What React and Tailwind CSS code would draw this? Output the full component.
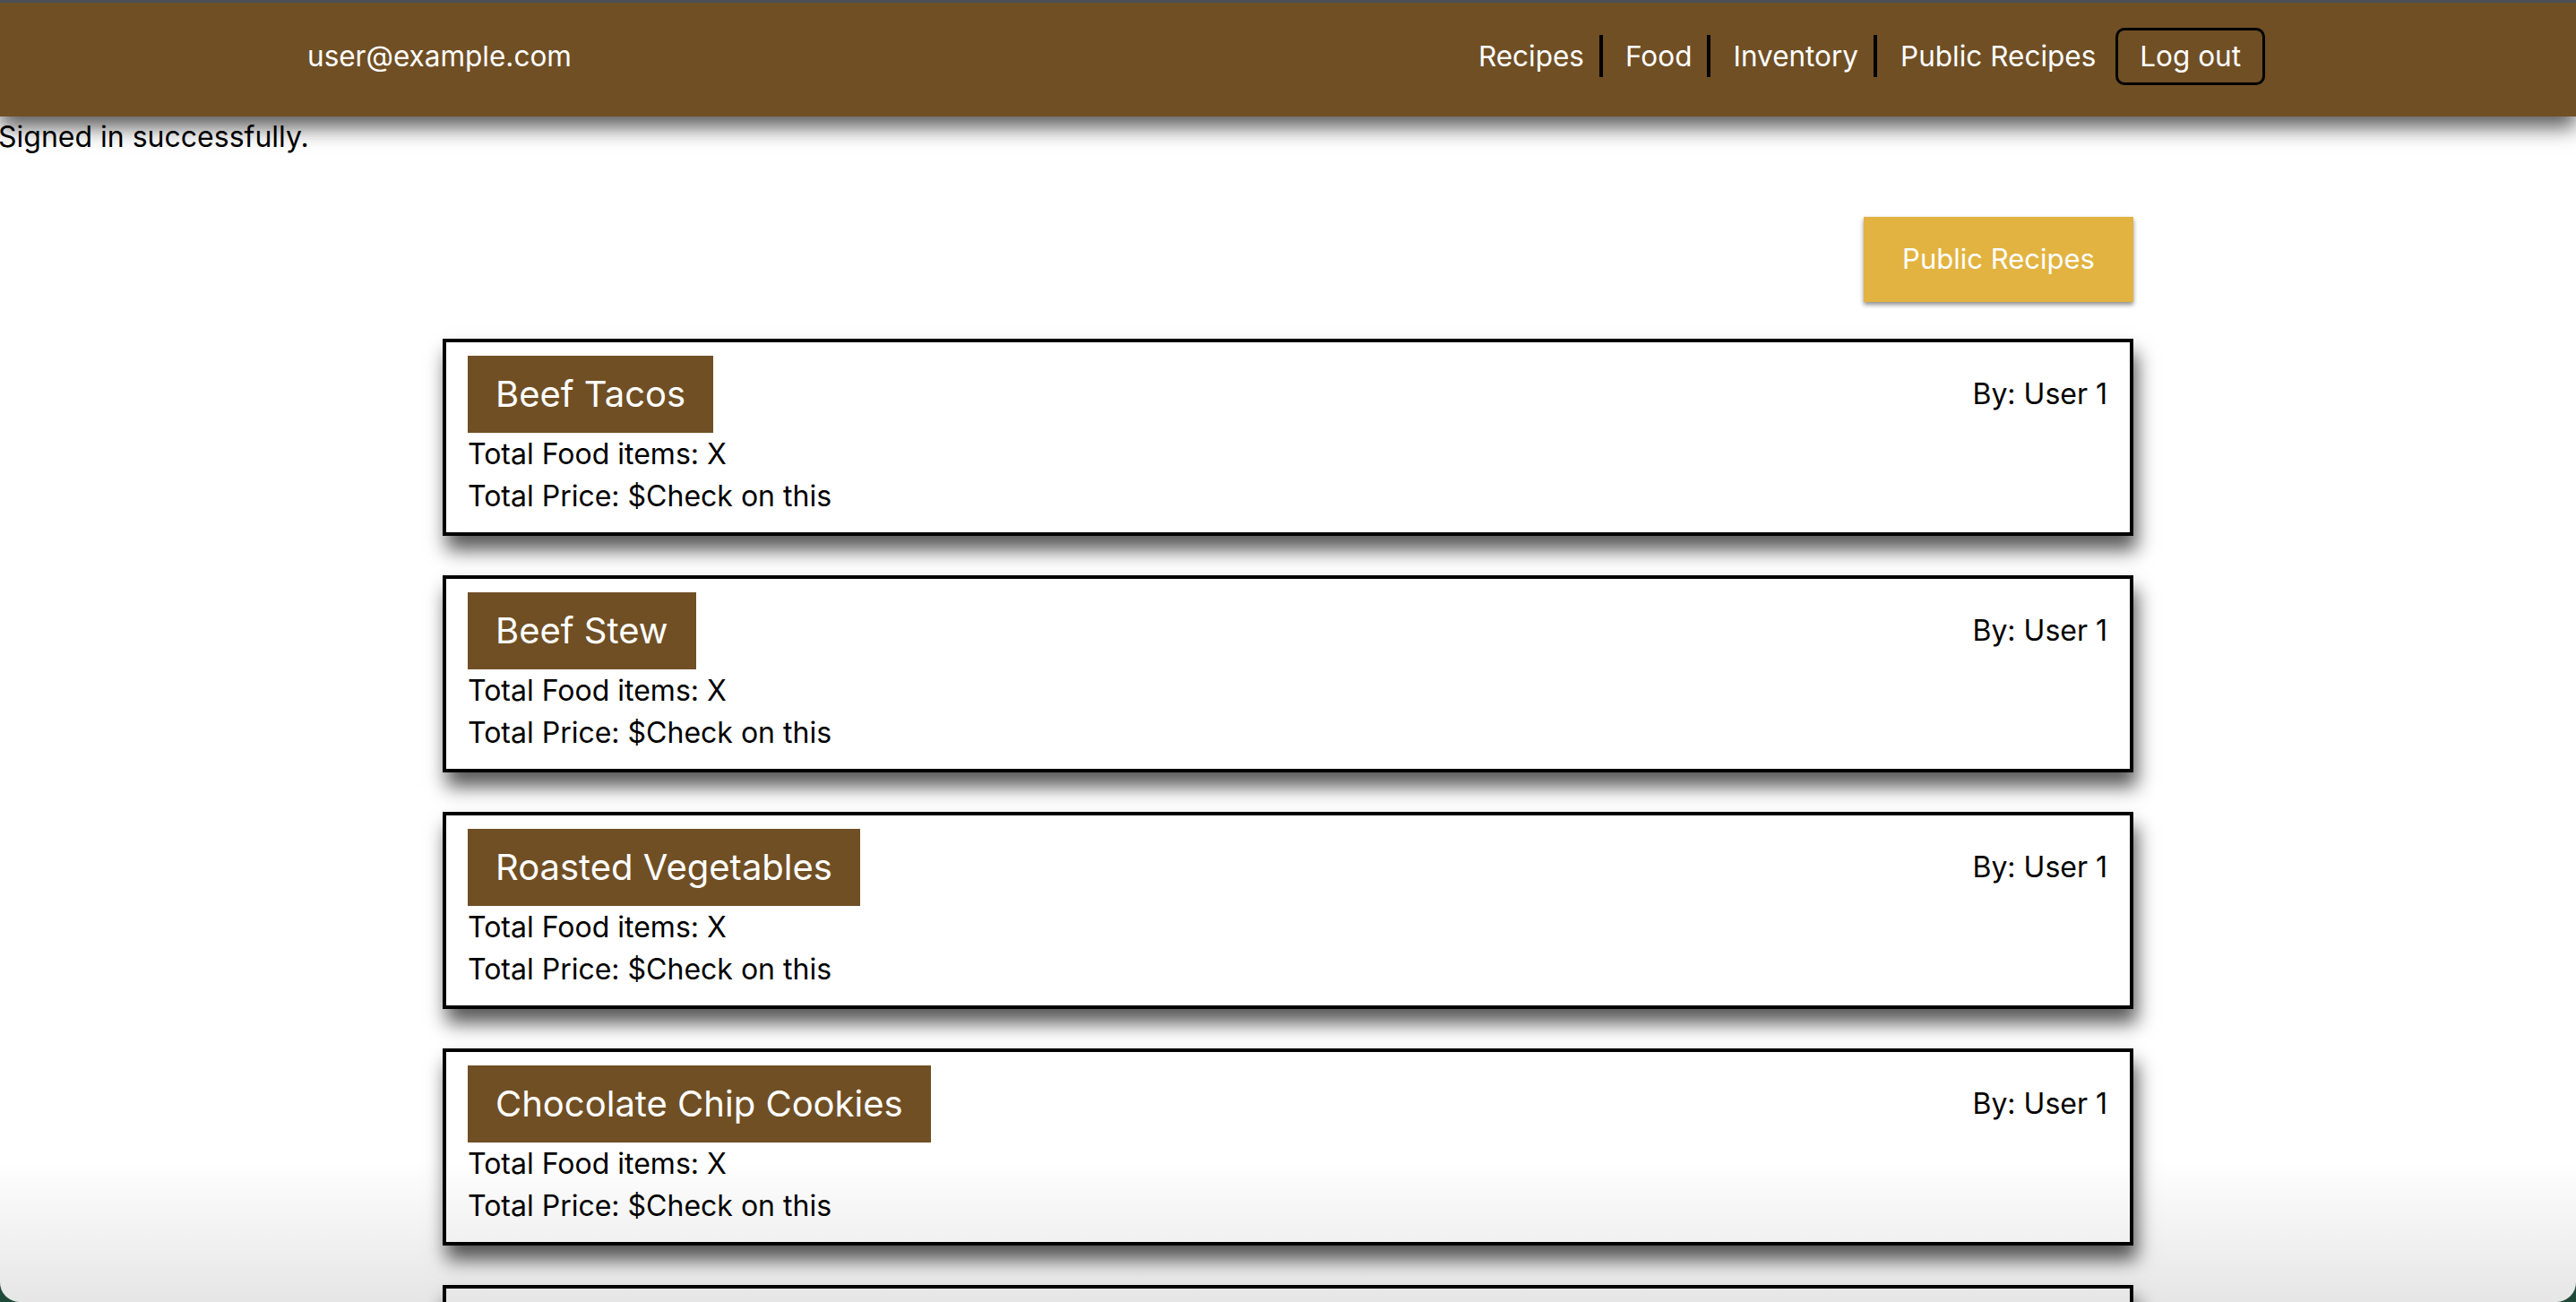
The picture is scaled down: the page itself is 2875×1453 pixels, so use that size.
const recipes = [
  { name: "Beef Tacos", author: "User 1" },
  { name: "Beef Stew", author: "User 1" },
  { name: "Roasted Vegetables", author: "User 1" },
  { name: "Chocolate Chip Cookies", author: "User 1" },
  { name: "Chicken Alfredo", author: "User 1" },
];

const navLinks = ["Recipes", "Food", "Inventory"];

const RecipeCard = ({ recipe }) => (
  <div className="bg-white border-[4px] border-black shadow-[4px_16px_20px_rgba(0,0,0,0.65)] pl-[24px] pr-[25px] pt-[15px] pb-[17px]">
    <div className="flex items-center justify-between">
      <h2 className="bg-[#704f25] text-white text-[40px] leading-[48px] px-[31px] py-[19px]">
        {recipe.name}
      </h2>
      <span className="text-[32px] text-black">By: {recipe.author}</span>
    </div>
    <p className="text-[32px] leading-[47px] text-black">Total Food items: X</p>
    <p className="text-[32px] leading-[47px] text-black">Total Price: $Check on this</p>
  </div>
);

const App = () => {
  return (
    <div className="h-screen bg-[#1f4a3a] overflow-hidden" style={{ fontFamily: "Inter, 'Noto Sans', sans-serif" }}>
      <div className="relative h-full overflow-hidden rounded-b-[22px] bg-white border-t-[3px] border-[#4b5058]">
        <nav className="relative z-10 h-[127px] bg-[#704f25] shadow-[0_12px_22px_rgba(0,0,0,0.65)] flex items-center justify-between pl-[343px] pr-[347px] pb-[8px]">
          <span className="text-white text-[31.5px]">user@example.com</span>
          <div className="flex items-center text-white text-[31.5px]">
            {navLinks.map((link) => (
              <a key={link} href="#" className="leading-[47px] pl-[25px] pr-[17px] border-r-[4px] border-black first:pl-0">
                {link}
              </a>
            ))}
            <a href="#" className="leading-[47px] pl-[26px] pr-[22px]">Public Recipes</a>
            <button className="h-[64px] px-[24px] border-[3px] border-black rounded-[10px] text-white text-[31.5px]">
              Log out
            </button>
          </div>
        </nav>

        <p className="-ml-[2px] text-[32px] leading-[46px] text-black">Signed in successfully.</p>

        <main className="w-[1887px] mx-auto pt-[66px]">
          <div className="flex justify-end mb-[41px]">
            <button className="w-[301px] h-[95px] bg-[#e2b340] text-white text-[31px] shadow-[0_3px_5px_rgba(0,0,0,0.45)]">
              Public Recipes
            </button>
          </div>
          <div className="flex flex-col gap-[44px]">
            {recipes.map((r) => (
              <RecipeCard key={r.name} recipe={r} />
            ))}
          </div>
        </main>

        <div className="pointer-events-none absolute inset-x-0 bottom-0 h-[160px] rounded-b-[22px] bg-gradient-to-b from-transparent to-black/10" />
      </div>
    </div>
  );
};

export default App;
